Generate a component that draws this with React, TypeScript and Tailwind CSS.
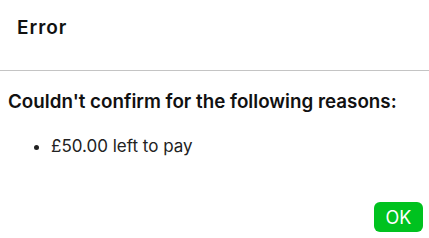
export default function App() {
  return (
    <div
      className="w-[429px] h-[238px] bg-white text-[#111] flex flex-col"
      style={{ fontFamily: 'Inter, "Noto Sans", sans-serif' }}
    >
      {/* header */}
      <div className="h-[71px] px-[17px] pt-[16px] border-b border-[#c4c4c4]">
        <h1 className="text-[19px] font-semibold leading-[24px] tracking-[0.05em]">Error</h1>
      </div>

      {/* body */}
      <div className="flex-1 flex flex-col pl-2 pr-[6px] pt-[19px]">
        <p className="text-[18.8px] font-semibold leading-[24px]">
          Couldn't confirm for the following reasons:
        </p>
        <ul className="list-disc pl-[43px] mt-[21px] text-[17px] leading-[22px] text-[#222]">
          <li>£50.00 left to pay</li>
        </ul>
        <div className="mt-auto flex justify-end pb-[6px]">
          <button className="w-[49px] h-[30px] rounded-[6px] bg-[#00c21f] text-white text-[18px]">
            OK
          </button>
        </div>
      </div>
    </div>
  );
}
